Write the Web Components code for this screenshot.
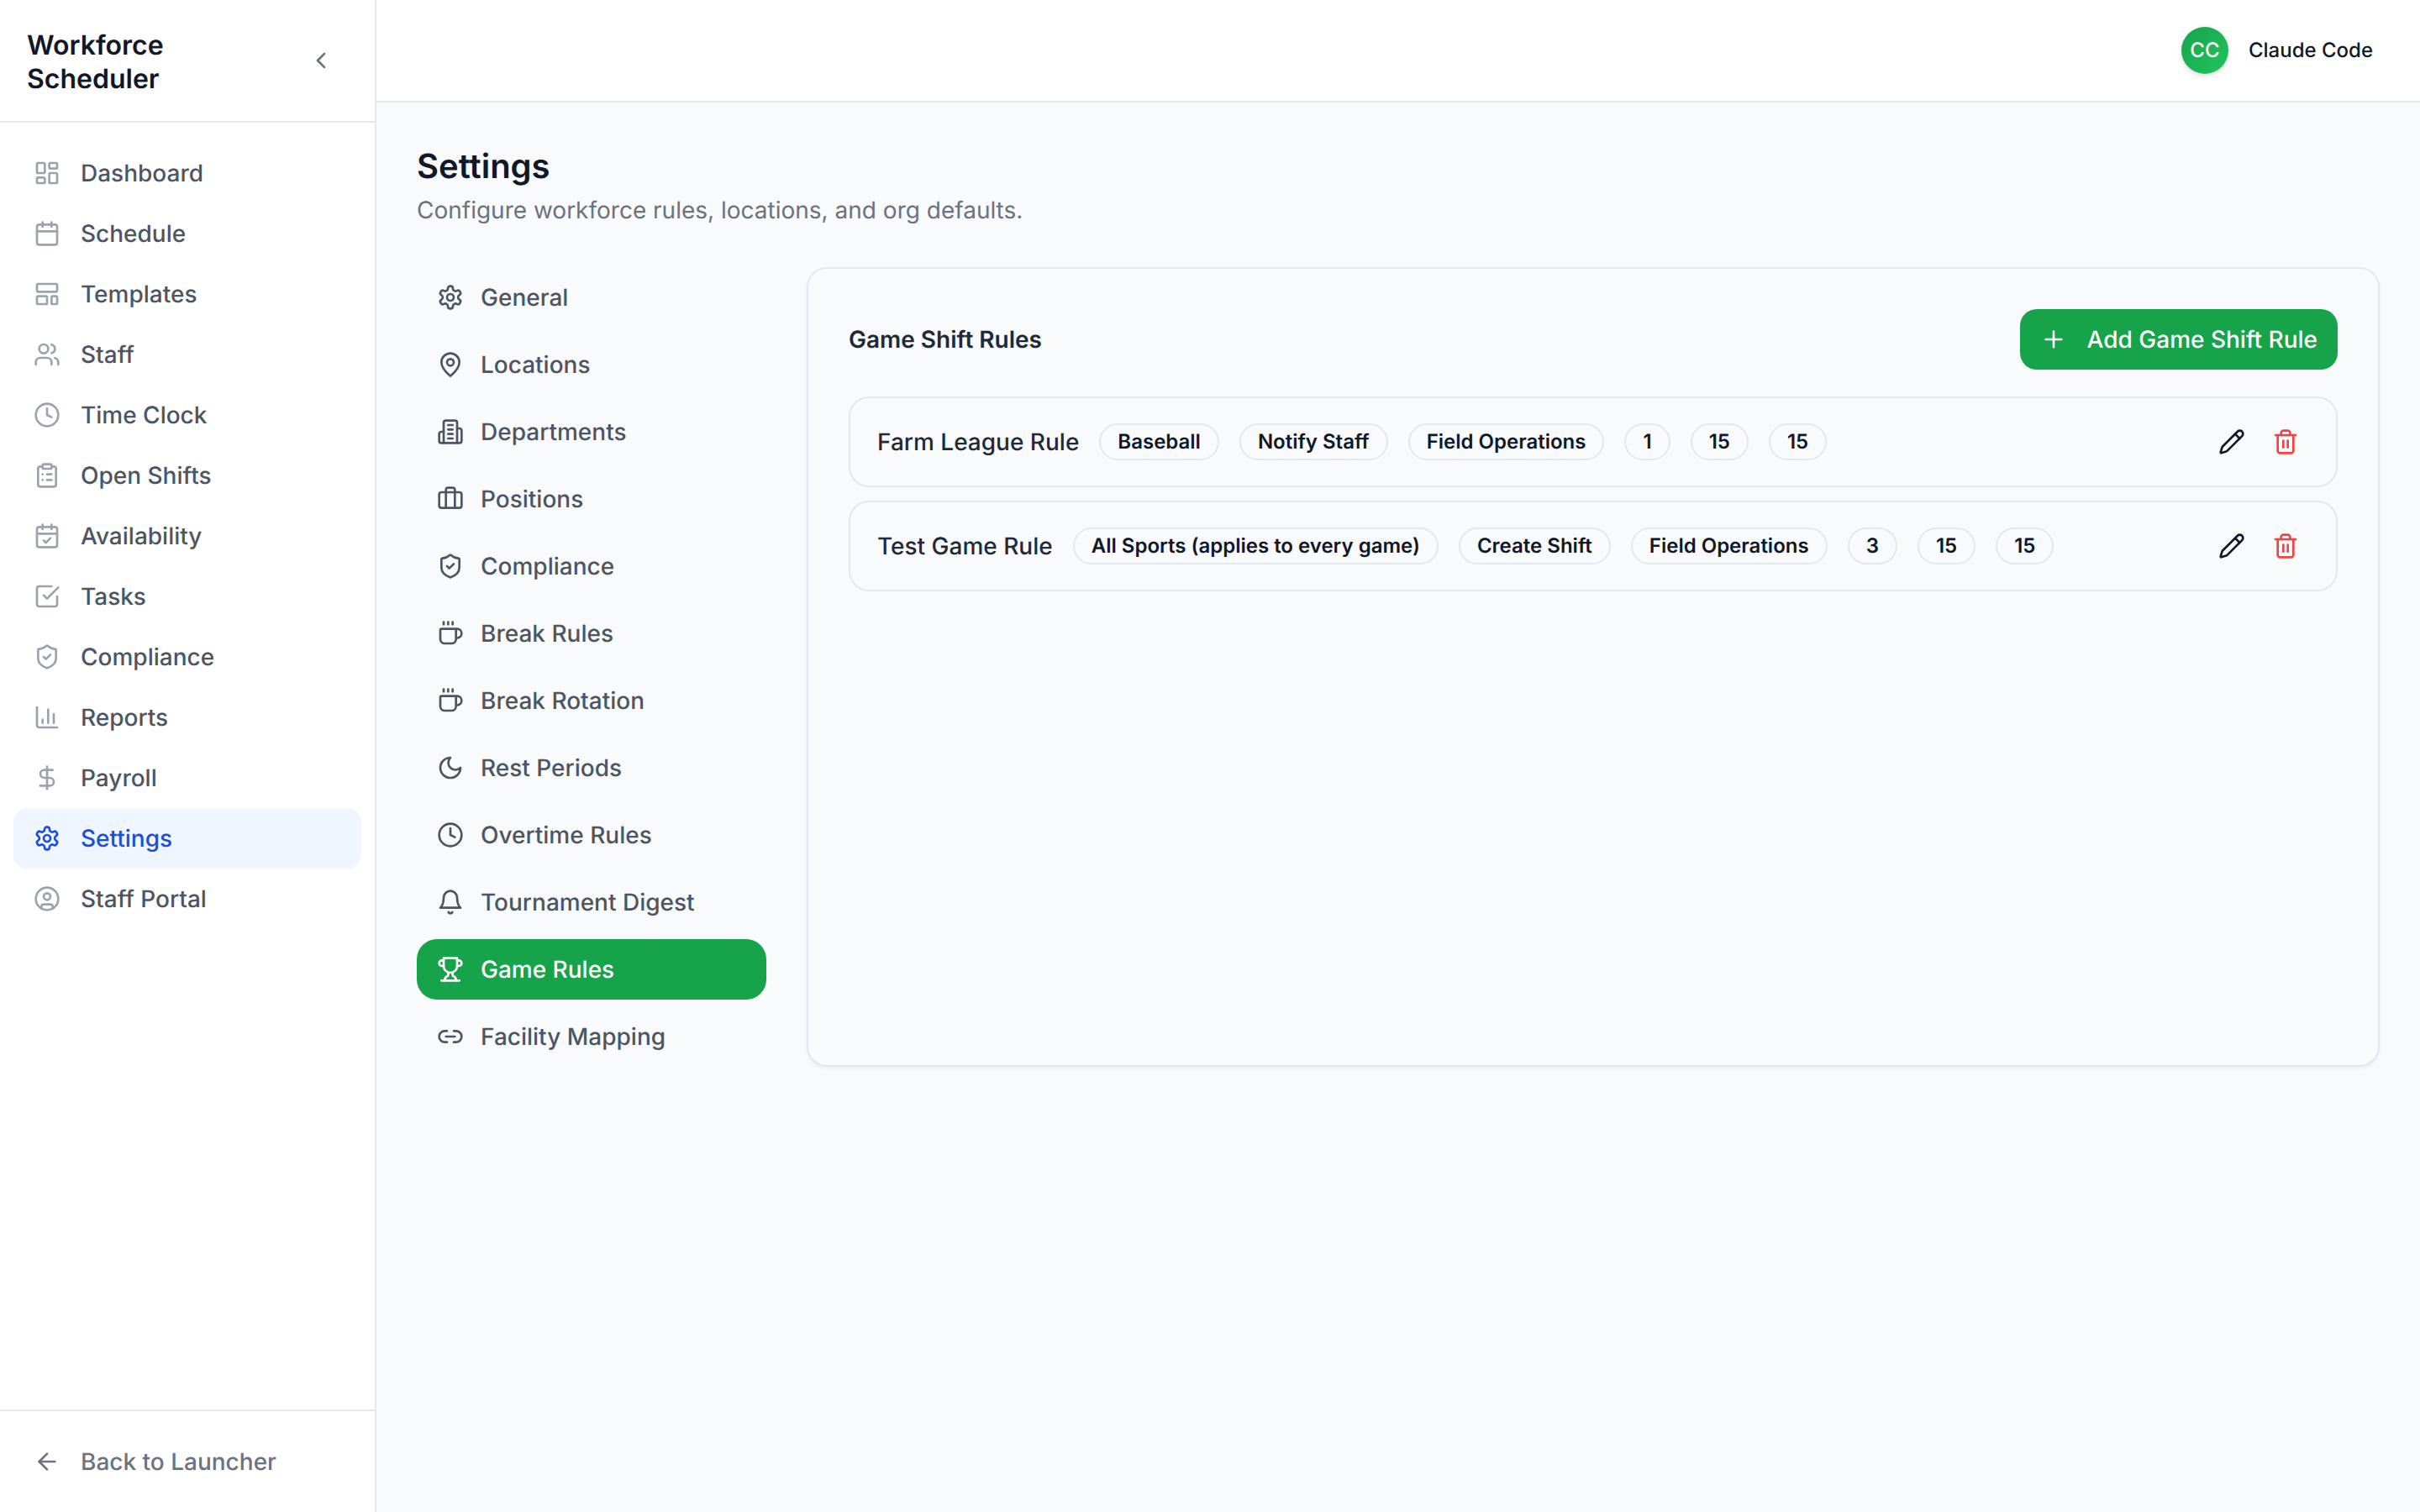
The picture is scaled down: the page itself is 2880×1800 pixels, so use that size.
<!DOCTYPE html>
<html lang="en">
<head>
<meta charset="utf-8">
<title>Workforce Scheduler</title>
<style>
  html, body { margin: 0; padding: 0; height: 100%; }
  body { font-family: Inter, "Liberation Sans", sans-serif; background: #f9fafb; color: #111827; text-rendering: geometricPrecision; overflow: hidden; }
</style>
</head>
<body>
<wf-app>
  <wf-sidebar slot="sidebar" title-a="Workforce" title-b="Scheduler">
    <wf-nav-item icon="dashboard">Dashboard</wf-nav-item>
    <wf-nav-item icon="calendar">Schedule</wf-nav-item>
    <wf-nav-item icon="template">Templates</wf-nav-item>
    <wf-nav-item icon="users">Staff</wf-nav-item>
    <wf-nav-item icon="clock">Time Clock</wf-nav-item>
    <wf-nav-item icon="clipboard">Open Shifts</wf-nav-item>
    <wf-nav-item icon="calendar-check">Availability</wf-nav-item>
    <wf-nav-item icon="square-check">Tasks</wf-nav-item>
    <wf-nav-item icon="shield">Compliance</wf-nav-item>
    <wf-nav-item icon="chart">Reports</wf-nav-item>
    <wf-nav-item icon="dollar">Payroll</wf-nav-item>
    <wf-nav-item icon="settings" active>Settings</wf-nav-item>
    <wf-nav-item icon="user-circle">Staff Portal</wf-nav-item>
    <wf-nav-item slot="footer" icon="arrow-left" muted>Back to Launcher</wf-nav-item>
  </wf-sidebar>
  <wf-topbar slot="topbar" initials="CC">Claude Code</wf-topbar>
  <wf-settings-page heading="Settings" sub="Configure workforce rules, locations, and org defaults.">
    <wf-tab slot="tabs" icon="settings">General</wf-tab>
    <wf-tab slot="tabs" icon="pin">Locations</wf-tab>
    <wf-tab slot="tabs" icon="building">Departments</wf-tab>
    <wf-tab slot="tabs" icon="briefcase">Positions</wf-tab>
    <wf-tab slot="tabs" icon="shield">Compliance</wf-tab>
    <wf-tab slot="tabs" icon="coffee">Break Rules</wf-tab>
    <wf-tab slot="tabs" icon="coffee">Break Rotation</wf-tab>
    <wf-tab slot="tabs" icon="moon">Rest Periods</wf-tab>
    <wf-tab slot="tabs" icon="clock">Overtime Rules</wf-tab>
    <wf-tab slot="tabs" icon="bell">Tournament Digest</wf-tab>
    <wf-tab slot="tabs" icon="trophy" active>Game Rules</wf-tab>
    <wf-tab slot="tabs" icon="link">Facility Mapping</wf-tab>
    <wf-card heading="Game Shift Rules" action="Add Game Shift Rule">
      <wf-rule name="Farm League Rule">
        <wf-pill>Baseball</wf-pill><wf-pill>Notify Staff</wf-pill><wf-pill>Field Operations</wf-pill><wf-pill>1</wf-pill><wf-pill>15</wf-pill><wf-pill>15</wf-pill>
      </wf-rule>
      <wf-rule name="Test Game Rule">
        <wf-pill>All Sports (applies to every game)</wf-pill><wf-pill>Create Shift</wf-pill><wf-pill>Field Operations</wf-pill><wf-pill>3</wf-pill><wf-pill>15</wf-pill><wf-pill>15</wf-pill>
      </wf-rule>
    </wf-card>
  </wf-settings-page>
</wf-app>
<script>
const ICONS = {
  'dashboard': '<rect width="7" height="9" x="3" y="3" rx="1"/><rect width="7" height="5" x="14" y="3" rx="1"/><rect width="7" height="9" x="14" y="12" rx="1"/><rect width="7" height="5" x="3" y="16" rx="1"/>',
  'calendar': '<path d="M8 2v4"/><path d="M16 2v4"/><rect width="18" height="18" x="3" y="4" rx="2"/><path d="M3 10h18"/>',
  'template': '<rect width="18" height="7" x="3" y="3" rx="1"/><rect width="9" height="7" x="3" y="14" rx="1"/><rect width="5" height="7" x="16" y="14" rx="1"/>',
  'users': '<path d="M16 21v-2a4 4 0 0 0-4-4H6a4 4 0 0 0-4 4v2"/><circle cx="9" cy="7" r="4"/><path d="M22 21v-2a4 4 0 0 0-3-3.87"/><path d="M16 3.13a4 4 0 0 1 0 7.75"/>',
  'clock': '<circle cx="12" cy="12" r="10"/><polyline points="12 6 12 12 16 14"/>',
  'clipboard': '<rect width="8" height="4" x="8" y="2" rx="1"/><path d="M16 4h2a2 2 0 0 1 2 2v14a2 2 0 0 1-2 2H6a2 2 0 0 1-2-2V6a2 2 0 0 1 2-2h2"/><path d="M12 11h4"/><path d="M12 16h4"/><path d="M8 11h.01"/><path d="M8 16h.01"/>',
  'calendar-check': '<path d="M8 2v4"/><path d="M16 2v4"/><rect width="18" height="18" x="3" y="4" rx="2"/><path d="M3 10h18"/><path d="m9 16 2 2 4-4"/>',
  'square-check': '<polyline points="9 11 12 14 22 4"/><path d="M21 12v7a2 2 0 0 1-2 2H5a2 2 0 0 1-2-2V5a2 2 0 0 1 2-2h11"/>',
  'shield': '<path d="M20 13c0 5-3.5 7.5-7.66 8.95a1 1 0 0 1-.67-.01C7.5 20.5 4 18 4 13V6a1 1 0 0 1 1-1c2 0 4.5-1.2 6.24-2.72a1.17 1.17 0 0 1 1.52 0C14.51 3.81 17 5 19 5a1 1 0 0 1 1 1z"/><path d="m9 12 2 2 4-4"/>',
  'chart': '<path d="M3 3v16a2 2 0 0 0 2 2h16"/><path d="M18 17V9"/><path d="M13 17V5"/><path d="M8 17v-3"/>',
  'dollar': '<line x1="12" x2="12" y1="2" y2="22"/><path d="M17 5H9.5a3.5 3.5 0 0 0 0 7h5a3.5 3.5 0 0 1 0 7H6"/>',
  'settings': '<path d="M12.22 2h-.44a2 2 0 0 0-2 2v.18a2 2 0 0 1-1 1.73l-.43.25a2 2 0 0 1-2 0l-.15-.08a2 2 0 0 0-2.73.73l-.22.38a2 2 0 0 0 .73 2.73l.15.1a2 2 0 0 1 1 1.72v.51a2 2 0 0 1-1 1.74l-.15.09a2 2 0 0 0-.73 2.73l.22.38a2 2 0 0 0 2.73.73l.15-.08a2 2 0 0 1 2 0l.43.25a2 2 0 0 1 1 1.73V20a2 2 0 0 0 2 2h.44a2 2 0 0 0 2-2v-.18a2 2 0 0 1 1-1.73l.43-.25a2 2 0 0 1 2 0l.15.08a2 2 0 0 0 2.73-.73l.22-.39a2 2 0 0 0-.73-2.73l-.15-.08a2 2 0 0 1-1-1.74v-.5a2 2 0 0 1 1-1.74l.15-.09a2 2 0 0 0 .73-2.73l-.22-.38a2 2 0 0 0-2.73-.73l-.15.08a2 2 0 0 1-2 0l-.43-.25a2 2 0 0 1-1-1.73V4a2 2 0 0 0-2-2z"/><circle cx="12" cy="12" r="3"/>',
  'user-circle': '<circle cx="12" cy="12" r="10"/><circle cx="12" cy="10" r="3"/><path d="M7 20.662V19a2 2 0 0 1 2-2h6a2 2 0 0 1 2 2v1.662"/>',
  'arrow-left': '<path d="m12 19-7-7 7-7"/><path d="M19 12H5"/>',
  'chevron-left': '<path d="m15 18-6-6 6-6"/>',
  'pin': '<path d="M20 10c0 4.993-5.539 10.193-7.399 11.799a1 1 0 0 1-1.202 0C9.539 20.193 4 14.993 4 10a8 8 0 0 1 16 0"/><circle cx="12" cy="10" r="3"/>',
  'building': '<path d="M6 22V4a2 2 0 0 1 2-2h8a2 2 0 0 1 2 2v18Z"/><path d="M6 12H4a2 2 0 0 0-2 2v6a2 2 0 0 0 2 2h2"/><path d="M18 9h2a2 2 0 0 1 2 2v9a2 2 0 0 1-2 2h-2"/><path d="M10 6h4"/><path d="M10 10h4"/><path d="M10 14h4"/><path d="M10 18h4"/>',
  'briefcase': '<path d="M16 20V4a2 2 0 0 0-2-2h-4a2 2 0 0 0-2 2v16"/><rect width="20" height="14" x="2" y="6" rx="2"/>',
  'coffee': '<path d="M10 2v2"/><path d="M14 2v2"/><path d="M16 8a1 1 0 0 1 1 1v8a4 4 0 0 1-4 4H7a4 4 0 0 1-4-4V9a1 1 0 0 1 1-1h14a4 4 0 1 1 0 8h-1"/><path d="M6 2v2"/>',
  'moon': '<path d="M12 3a6 6 0 0 0 9 9 9 9 0 1 1-9-9Z"/>',
  'bell': '<path d="M6 8a6 6 0 0 1 12 0c0 7 3 9 3 9H3s3-2 3-9"/><path d="M10.3 21a1.94 1.94 0 0 0 3.4 0"/>',
  'trophy': '<path d="M6 9H4.5a2.5 2.5 0 0 1 0-5H6"/><path d="M18 9h1.5a2.5 2.5 0 0 0 0-5H18"/><path d="M4 22h16"/><path d="M10 14.66V17c0 .55-.47.98-.97 1.21C7.85 18.75 7 20.24 7 22"/><path d="M14 14.66V17c0 .55.47.98.97 1.21C16.15 18.75 17 20.24 17 22"/><path d="M18 2H6v7a6 6 0 0 0 12 0V2Z"/>',
  'link': '<path d="M9 17H7A5 5 0 0 1 7 7h2"/><path d="M15 7h2a5 5 0 1 1 0 10h-2"/><line x1="8" x2="16" y1="12" y2="12"/>',
  'plus': '<path d="M5 12h14"/><path d="M12 5v14"/>',
  'pencil': '<path d="M21.174 6.812a1 1 0 0 0-3.986-3.987L3.842 16.174a2 2 0 0 0-.5.83l-1.321 4.352a.5.5 0 0 0 .623.622l4.353-1.32a2 2 0 0 0 .83-.497z"/><path d="m15 5 4 4"/>',
  'trash': '<path d="M3 6h18"/><path d="M19 6v14c0 1-1 2-2 2H7c-1 0-2-1-2-2V6"/><path d="M8 6V4c0-1 1-2 2-2h4c1 0 2 1 2 2v2"/><line x1="10" x2="10" y1="11" y2="17"/><line x1="14" x2="14" y1="11" y2="17"/>'
};

function define(tag, css, html) {
  customElements.define(tag, class extends HTMLElement {
    constructor() {
      super();
      this.attachShadow({ mode: 'open' });
    }
    connectedCallback() {
      if (this._done) return;
      this._done = true;
      const attrs = n => this.getAttribute(n) || '';
      this.shadowRoot.innerHTML = '<style>' + css + '</style>' + (typeof html === 'function' ? html(attrs) : html);
    }
  });
}

define('wf-icon',
  ':host{display:inline-flex;width:var(--icon-size,32px);height:var(--icon-size,32px);flex:none;color:inherit}svg{display:block;width:100%;height:100%;fill:none;stroke:currentColor;stroke-width:2;stroke-linecap:round;stroke-linejoin:round}',
  a => '<svg viewBox="0 0 24 24" aria-hidden="true">' + (ICONS[a('name')] || '') + '</svg>');

define('wf-app',
  ':host{display:flex;height:100vh;width:100%;overflow:hidden}.col{flex:1;min-width:0;display:flex;flex-direction:column}',
  '<slot name="sidebar"></slot><div class="col"><slot name="topbar"></slot><slot></slot></div>');

define('wf-sidebar',
  `:host{display:flex;flex-direction:column;flex:none;width:448px;box-sizing:border-box;height:100%;background:#fff;border-right:2px solid #e5e7eb}
   header{display:flex;align-items:center;justify-content:space-between;height:144px;box-sizing:content-box;padding:0 32px;border-bottom:2px solid #e5e7eb}
   h2{margin:4px 0 0;font:600 32px/40px Inter,sans-serif;color:#111827;width:200px}
   .toggle{display:flex;padding:16px;color:#6b7280}
   nav{flex:1;display:flex;flex-direction:column;padding:24px 16px 0}
   footer{border-top:2px solid #e5e7eb;padding:24px 16px}`,
  a => `<header><h2>${a('title-a')} ${a('title-b')}</h2><span class="toggle"><wf-icon name="chevron-left"></wf-icon></span></header>
        <nav><slot></slot></nav><footer><slot name="footer"></slot></footer>`);

define('wf-nav-item',
  `:host{display:flex;align-items:center;gap:24px;height:72px;padding:0 24px;border-radius:16px;font:500 28px/40px Inter,sans-serif;color:#4b5563}
   wf-icon{color:#9ca3af}
   :host([active]){background:#eff6ff;color:#1d4ed8}
   :host([active]) wf-icon{color:#1d4ed8}
   :host([muted]){color:#6b7280}
   :host([muted]) wf-icon{color:#6b7280}`,
  a => `<wf-icon name="${a('icon')}"></wf-icon><slot></slot>`);

define('wf-topbar',
  `:host{display:flex;align-items:center;justify-content:flex-end;height:120px;flex:none;background:#fff;border-bottom:2px solid #e5e7eb;padding:0 56px 0 0}
   .avatar{width:56px;height:56px;border-radius:50%;background:linear-gradient(135deg,#16a34a,#22c55e);box-shadow:0 2px 6px rgba(0,0,0,.15);color:#fff;display:flex;align-items:center;justify-content:center;font:500 24px/32px Inter,sans-serif;margin-right:24px}
   .name{font:500 24px/32px Inter,sans-serif;color:#111827}`,
  a => `<span class="avatar">${a('initials')}</span><span class="name"><slot></slot></span>`);

define('wf-settings-page',
  `:host{display:block;flex:1;min-height:0;padding:48px;background:#f9fafb}
   h1{margin:0;font:600 40px/56px Inter,sans-serif;color:#111827}
   p{margin:4px 0 48px;font:400 28px/40px Inter,sans-serif;color:#6b7280}
   .layout{display:flex;gap:48px;align-items:stretch}
   .tabs{display:flex;flex-direction:column;gap:8px;width:416px;flex:none}
   .content{flex:1;min-width:0;display:flex}`,
  a => `<h1>${a('heading')}</h1><p>${a('sub')}</p>
        <div class="layout"><div class="tabs"><slot name="tabs"></slot></div><div class="content"><slot></slot></div></div>`);

define('wf-tab',
  `:host{display:flex;align-items:center;gap:20px;height:72px;padding:0 24px;border-radius:24px;font:500 28px/40px Inter,sans-serif;color:#4b5563}
   :host([active]){background:#16a34a;color:#fff}`,
  a => `<wf-icon name="${a('icon')}"></wf-icon><slot></slot>`);

define('wf-card',
  `:host{display:block;flex:1;box-sizing:border-box;border:2px solid #e2e8f0;border-radius:24px;padding:48px;background:#f9fafc;box-shadow:0 2px 4px rgba(15,23,42,.05)}
   .head{display:flex;align-items:center;justify-content:space-between;margin-bottom:32px}
   h3{margin:0;font:600 28px/40px Inter,sans-serif;color:#1f2937}
   .add{display:flex;align-items:center;gap:24px;height:72px;box-sizing:border-box;padding:0 24px;border-radius:20px;background:#16a34a;color:#fff;font:500 28px/40px Inter,sans-serif}
   .list{display:flex;flex-direction:column;gap:16px}`,
  a => `<div class="head"><h3>${a('heading')}</h3><span class="add"><wf-icon name="plus"></wf-icon>${a('action')}</span></div>
        <div class="list"><slot></slot></div>`);

define('wf-rule',
  `:host{display:flex;align-items:center;gap:24px;box-sizing:border-box;height:108px;padding:24px 32px;border:2px solid #e5e7eb;border-radius:24px}
   .name{font:500 28px/40px Inter,sans-serif;color:#1f2937}
   .actions{margin-left:auto;display:flex;gap:8px}
   .btn{display:flex;padding:12px;color:#111827}
   .btn.del{color:#ef4444}`,
  a => `<span class="name">${a('name')}</span><slot></slot>
        <span class="actions"><span class="btn"><wf-icon name="pencil"></wf-icon></span><span class="btn del"><wf-icon name="trash"></wf-icon></span></span>`);

define('wf-pill',
  `:host{display:inline-flex;align-items:center;box-sizing:border-box;height:44px;padding:0 20px;border:2px solid #e2e8f0;border-radius:999px;font:600 24px/32px Inter,sans-serif;color:#0f172a;white-space:nowrap}`,
  '<slot></slot>');
</script>
</body>
</html>
